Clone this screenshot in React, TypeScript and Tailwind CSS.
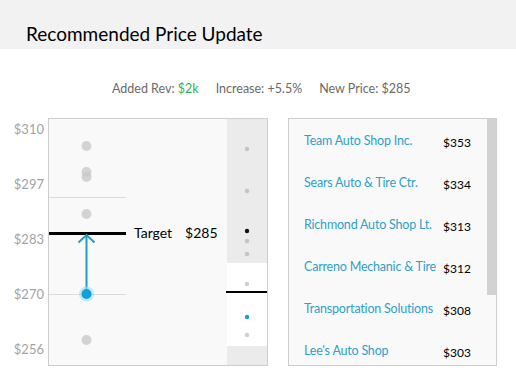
import React from 'react';

const axisLabels = ['$310', '$297', '$283', '$270', '$256'];

const competitors = [
  { name: 'Team Auto Shop Inc.', price: '$353' },
  { name: 'Sears Auto & Tire Ctr.', price: '$334' },
  { name: 'Richmond Auto Shop Lt.', price: '$313' },
  { name: 'Carreno Mechanic & Tire', price: '$312' },
  { name: 'Transportation Solutions', price: '$308' },
  { name: "Lee's Auto Shop", price: '$303' },
];

const greyDots = [27, 53, 58, 95, 221];
const stripDots = [
  { y: 30, c: '#c4c4c4' },
  { y: 72, c: '#c4c4c4' },
  { y: 112, c: '#111111' },
  { y: 122, c: '#c4c4c4' },
  { y: 135, c: '#c4c4c4' },
  { y: 165, c: '#d0d0d0' },
  { y: 198, c: '#1a9fd0' },
  { y: 216, c: '#d0d0d0' },
];

function PriceChart() {
  return (
    <div className="relative w-[220px] h-[248px] border border-[#cdcdcd] flex">
      <div className="flex-1 bg-[#f9f9f9]" />
      <div className="w-[40px] flex flex-col">
        <div className="h-[144px] bg-[#ebebeb]" />
        <div className="h-[83px] bg-white" />
        <div className="flex-1 bg-[#ebebeb]" />
      </div>

      <svg className="absolute inset-0" width="218" height="246" viewBox="0 0 218 246">
        {/* grid */}
        <line x1="0" y1="78.5" x2="77" y2="78.5" stroke="#dcdcdc" strokeWidth="1" />
        <line x1="0" y1="175.5" x2="77" y2="175.5" stroke="#dcdcdc" strokeWidth="1" />

        {/* competitor dots */}
        {greyDots.map((y, i) => (
          <circle key={i} cx="37.5" cy={y} r="5" fill="#c9c9c9" fillOpacity="0.8" />
        ))}

        {/* target line */}
        <line x1="0" y1="114.5" x2="77" y2="114.5" stroke="#000" strokeWidth="3" />

        {/* arrow */}
        <line x1="37.5" y1="175" x2="37.5" y2="117" stroke="#1f9cc4" strokeWidth="2" />
        <polyline points="29.5,123.5 37.5,116 45.5,123.5" fill="none" stroke="#1f9cc4" strokeWidth="2" />

        {/* current price */}
        <circle cx="37.5" cy="175" r="7.5" fill="#9fd8f0" fillOpacity="0.6" />
        <circle cx="37.5" cy="175" r="5" fill="#0ea2dc" />

        {/* overview strip */}
        <line x1="177" y1="173" x2="218" y2="173" stroke="#000" strokeWidth="2" />
        {stripDots.map((d, i) => (
          <circle key={i} cx="198" cy={d.y} r="2.2" fill={d.c} />
        ))}
      </svg>

      <div className="absolute left-[85px] top-[105px] flex gap-[13px] text-[14px] leading-[18px] text-black">
        <span>Target</span>
        <span>$285</span>
      </div>
    </div>
  );
}

function CompetitorList() {
  return (
    <div className="relative w-[209px] h-[248px] border border-[#cdcdcd] bg-[#f9f9f9] overflow-hidden">
      <div className="absolute right-0 top-0 w-[9px] h-[176px] bg-[#d2d2d2]" />
      <div className="flex flex-col pt-[1px]">
        {competitors.map((c) => (
          <div key={c.name} className="h-[42px] flex items-center pl-[15px]">
            <span className="w-[139px] text-[12.5px] tracking-[-0.2px] text-[#2f9fcb] whitespace-nowrap">
              {c.name}
            </span>
            <span className="mt-[3px] text-[12px] text-black">{c.price}</span>
          </div>
        ))}
      </div>
    </div>
  );
}

export default function App() {
  return (
    <div className="w-[516px] h-[389px] bg-white font-['Lato','Open_Sans',sans-serif] overflow-hidden">
      <div className="h-[49px] bg-[#f2f2f2] pl-[26px] pt-[23px]">
        <h1 className="text-[19px] leading-[22px] text-black font-normal">Recommended Price Update</h1>
      </div>

      <div className="mt-[32px] pl-[112px] flex gap-[17px] text-[12.5px] leading-[16px] text-[#6a6a6a]">
        <span>
          Added Rev: <span className="text-[#37b24d]">$2k</span>
        </span>
        <span>Increase: +5.5%</span>
        <span>New Price: $285</span>
      </div>

      <div className="mt-[21px] flex">
        <div className="w-[48px] pr-[4px] pt-[3px] flex flex-col gap-[39px] text-right text-[13px] leading-[16px] text-[#a3a3a3]">
          {axisLabels.map((l) => (
            <span key={l}>{l}</span>
          ))}
        </div>
        <PriceChart />
        <div className="w-[20px]" />
        <CompetitorList />
      </div>
    </div>
  );
}
